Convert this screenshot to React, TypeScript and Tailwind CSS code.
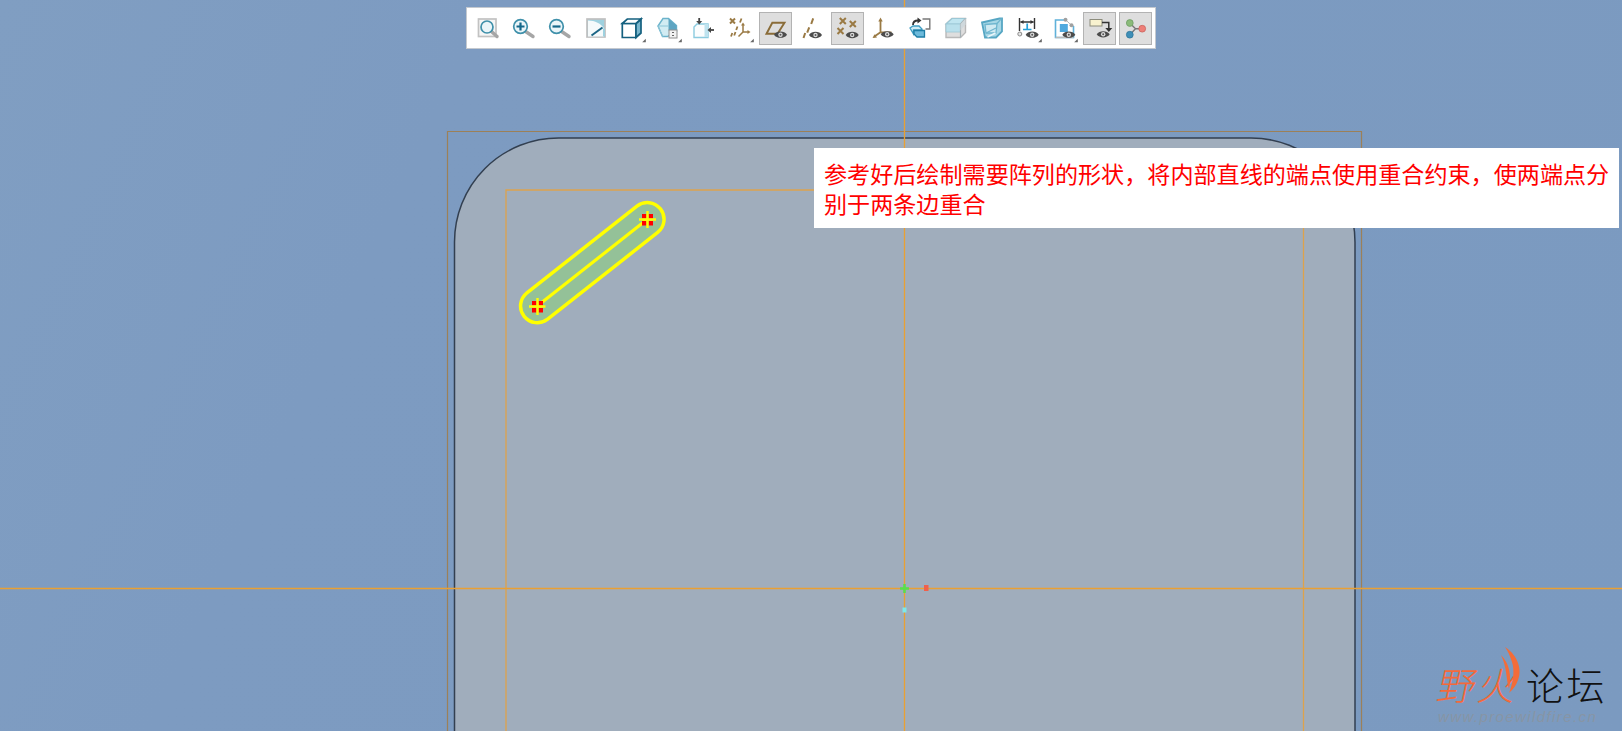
import React from "react";

const Eye = ({ x = 23, y = 23 }: { x?: number; y?: number }) => (
  <g transform={`translate(${x} ${y})`}>
    <path d="M-6.500 0C-4-4.200 4-4.200 6.500 0C4 4.200-4 4.200-6.500 0Z" fill="#4c4c4c" />
    <circle r="2.200" fill="#dcdcdc" />
    <circle r="1" fill="#555" />
  </g>
);
const Corner = () => <path d="M32.300 30.300h-3.600l3.600-3.600z" fill="#666" />;
const Glass = ({ x, y, r = 7 }: { x: number; y: number; r?: number }) => (
  <g>
    <path d={`M${x + r * 0.7} ${y + r * 0.7}L27.500 24.500`} stroke="#a6a6a6" strokeWidth="3.400" strokeLinecap="round" />
    <circle cx={x} cy={y} r={r} fill="#eaf5f9" stroke="#3f90aa" strokeWidth="1.700" />
  </g>
);
const X = ({ x, y, s = 3 }: { x: number; y: number; s?: number }) => (
  <path d={`M${x - s} ${y - s}l${2 * s} ${2 * s}M${x + s} ${y - s}l${-2 * s} ${2 * s}`} stroke="#9a7a44" strokeWidth="2" />
);

const icons: { key: string; on?: boolean; body: React.ReactNode }[] = [
  { key: "refit", body: <><rect x="9" y="7" width="17.500" height="17.500" fill="#f6f6f6" stroke="#c2c2c2" strokeWidth="1.700" /><Glass x={17.500} y={15} r={6} /></> },
  { key: "in", body: <><Glass x={15} y={14.500} r={6.800} /><path d="M11 14.500h8M15 10.500v8" stroke="#14688a" strokeWidth="2.200" /></> },
  { key: "out", body: <><Glass x={15} y={14.500} r={6.800} /><path d="M11 14.500h8" stroke="#14688a" strokeWidth="2.200" /></> },
  { key: "repaint", body: <><rect x="9.500" y="7" width="18" height="18" fill="#9ed1df" stroke="#c0c0c0" strokeWidth="1.700" /><path d="M10.500 24.500V8.500c7 0 13 3 16 8v8z" fill="#f5fafb" /><path d="M14 23.500l11-8" stroke="#1a6585" strokeWidth="2" /><path d="M26.500 16.500v8" stroke="#9ed1df" strokeWidth="2" /></> },
  { key: "cube", body: <><path d="M8.800 11.500h13.700v14H8.800z" fill="#fff" stroke="#14607f" strokeWidth="1.700" /><path d="M22.500 11.500l5-4.500v14l-5 4.500z" fill="#79b6cd" stroke="#14607f" strokeWidth="1.700" /><path d="M8.800 11.500l5-4.500h13.700l-5 4.500z" fill="#fff" stroke="#14607f" strokeWidth="1.700" /><Corner /></> },
  { key: "saved", body: <><path d="M8.500 14l5-7.500h5.500l8 7v6l-9 5h-5z" fill="#d2ecf3" stroke="#6bb3cb" strokeWidth="1.400" /><path d="M19 6.500l8 7v5h-8z" fill="#5ea5c2" /><path d="M8.500 14h10.500M13.500 25l-5-11" fill="none" stroke="#8cc6d8" strokeWidth="1" /><rect x="19.500" y="18" width="8" height="8" fill="#f2f2f2" stroke="#8f8f8f" /><path d="M22.500 20.500h2M22.500 23.500h2" stroke="#666" /><Corner /></> },
  { key: "reorient", body: <><path d="M8.500 15l3-3h11v13.500H8.500z" fill="#fbfdfe" stroke="#8ccbdf" strokeWidth="1.400" /><path d="M22.500 12v13l-3.500 0 0-13z" fill="#bfe3ef" /><path d="M13.700 6v4" stroke="#444" strokeWidth="1.800" /><path d="M10.700 9h6l-3 3.500z" fill="#444" /><path d="M25 18h3.500" stroke="#444" strokeWidth="1.800" /><path d="M25.500 15v6L22 18z" fill="#444" /></> },
  { key: "datumdisp", body: <><X x={11} y={9} s={2.500} /><path d="M20 6.500l-1.500 4M16 14.500l-1.300 3.500M14 20l-1.300 3.500M10.800 21l-1.300 3.500" stroke="#9a7a44" strokeWidth="1.800" /><path d="M21.500 12v8M21.500 20h6M21.500 20l-4.500 4.500" stroke="#9a7a44" strokeWidth="1.500" /><path d="M21.500 10.500l-2 3h4zM29 20l-3-2v4z" fill="#9a7a44" /><Corner /></> },
  { key: "plane", on: true, body: <><path d="M9 21.700L14.800 10.800H27L20 21.700Z" fill="none" stroke="#8a6c38" strokeWidth="1.900" /><Eye x={23} y={22.700} /></> },
  { key: "axis", body: <><path d="M19.700 6.300l-2 5.700M15.700 15.300l-2 5.400M11.700 21l-1.700 5" stroke="#9a7a44" strokeWidth="2" /><Eye x={22} y={23} /></> },
  { key: "point", on: true, body: <><X x={13.300} y={9} /><X x={23.300} y={12} /><X x={11} y={19} /><Eye x={22.700} y={23} /></> },
  { key: "csys", body: <><path d="M15 8v12.300M15 20.300l-6.500 4.500M15 20.300h11" stroke="#9a7a44" strokeWidth="1.800" /><path d="M15 5.500l-2.200 4h4.400z" fill="#9a7a44" /><path d="M7 26l4.500-.5-2.300-3.300z" fill="#9a7a44" /><Eye x={21.700} y={22.300} /></> },
  { key: "annot", body: <><path d="M21 7h7.300v10H24" fill="none" stroke="#777" strokeWidth="1.400" /><path d="M11.500 13c0-3 2-4.500 5-4.500" fill="none" stroke="#333" strokeWidth="1.800" /><path d="M16 5.500l4 3-4 3z" fill="#333" /><path d="M8.500 16l3-2h6l3 3v1H12v4z" fill="#d0ecf5" stroke="#3f9dc2" strokeWidth="1.300" /><path d="M12.500 18.500h10.500v6.500H15.500l-3-3z" fill="#6dbadb" stroke="#1e7ea6" strokeWidth="1.300" /></> },
  { key: "shade", body: <><path d="M8.500 12l6-5.500h13.500v14l-5 5H8.500z" fill="#dedede" stroke="#b8b8b8" strokeWidth="1.400" /><path d="M8.500 12l6-5.500h13.500l-5 5.500z" fill="#bfe5f0" stroke="#9cc8d6" strokeWidth="1.100" /><path d="M8.500 12H23v8H8.500z" fill="#b9e0ec" stroke="#9cc8d6" strokeWidth=".8" /><path d="M23 12v13.500M23 12l5-5.500" stroke="#a4b0b5" strokeWidth="1.200" /><path d="M23 12l5-5.500v6l-5 6z" fill="#cfd8dc" /></> },
  { key: "wire", body: <><path d="M8.500 10.500L26 6.500l2.500 0v13l-6 6H11.500z" fill="#a7d7e6" stroke="#56a6c3" strokeWidth="1.800" /><path d="M11.500 12.500l12-1-1 9.500H12.500z" fill="#cfeaf2" stroke="#6fb6cf" strokeWidth="1.300" /><path d="M12.500 21l10-5M23.500 11.500l4.500-5" stroke="#6fb6cf" strokeWidth="1.200" /><path d="M14 25l8-4" stroke="#eaf6fa" strokeWidth="1.400" /></> },
  { key: "dim", body: <><path d="M10 6v13M25 6v11M11 10h13" stroke="#333" strokeWidth="1.400" /><path d="M11 10l3-2v4zM24 10l-3-2v4z" fill="#333" /><path d="M17.700 11.500v5.700M13.500 17.500h8.500" stroke="#27a0d8" strokeWidth="1.700" /><circle cx="10.300" cy="22" r="2" fill="#e6e6e6" stroke="#8a8a8a" /><Eye x={22.700} y={22.700} /><Corner /></> },
  { key: "appear", body: <><path d="M19 8H10v17.500h18V14" fill="#fff" stroke="#5fb1da" strokeWidth="1.600" /><path d="M10 25.500h18" stroke="#bbb" strokeWidth="1.400" /><rect x="14.300" y="12" width="8" height="8" fill="#4fa9de" /><path d="M20 7.700l6 5.600" stroke="#bbb" strokeWidth="1" /><circle cx="20" cy="7.700" r="2" fill="#a0a0a0" /><circle cx="26" cy="13.300" r="2" fill="#a0a0a0" /><Eye x={23.300} y={22.700} /><Corner /></> },
  { key: "flag", on: true, body: <><rect x="8.500" y="7.500" width="12" height="6.500" fill="#f8f2cf" stroke="#8c8c7c" /><path d="M20.500 10.500h6.800v7" fill="none" stroke="#333" strokeWidth="1.500" /><path d="M23.800 16h7l-3.500 4z" fill="#333" /><Eye x={21.700} y={22.300} /></> },
  { key: "tree", on: true, body: <><path d="M12.300 11l5.700 5.700-5.700 6M18 16.700h6.700" fill="none" stroke="#777" strokeWidth="1.400" /><circle cx="12.300" cy="11" r="3.400" fill="#8bbb7a" stroke="#6f9d66" strokeWidth=".8" /><circle cx="24.700" cy="16.700" r="3.400" fill="#ee7f78" stroke="#c96660" strokeWidth=".8" /><circle cx="12.300" cy="22.700" r="3.400" fill="#3f8fb8" stroke="#30779b" strokeWidth=".8" /></> },
];

export default function App() {
  return (
    <div
      className="relative w-[1622px] h-[731px] overflow-hidden bg-[linear-gradient(115deg,#809ec2_0%,#7d9bc1_25%,#7b9ac0_100%)]"
      style={{ fontFamily: '"Liberation Sans","Noto Sans CJK SC",sans-serif' }}
    >
      <svg className="absolute inset-0" width="1622" height="731" viewBox="0 0 1622 731">
        <path d="M454.500 740V242a104 104 0 0 1 104-104H1251a104 104 0 0 1 104 104V740Z" fill="#a0adbc" stroke="#323f50" strokeWidth="1.500" />
        <path d="M447.500 740V131.500H1361.500V740" fill="none" stroke="#9c8058" strokeWidth="1.200" />
        <path d="M506 740V190H1303.500V740" fill="none" stroke="#dda24c" strokeWidth="1.300" />
        <path d="M904.500 0V731M0 588.500H1622" stroke="#e9a033" strokeWidth="1.300" />
        <path d="M904.500 584v9M900 588.500h9" stroke="#57e04a" strokeWidth="2.500" />
        <rect x="924" y="585" width="4.500" height="6" fill="#f0604a" />
        <rect x="902.500" y="607.500" width="4" height="5" fill="#7fe8e8" />
        <path d="M537.300 306L647.300 219.300" stroke="#ffff00" strokeWidth="37" strokeLinecap="round" />
        <path d="M537.300 306L647.300 219.300" stroke="#94c198" strokeWidth="30" strokeLinecap="round" />
        <path d="M537.300 306L647.300 219.300" stroke="#ffff00" strokeWidth="3.200" />
        <g fill="#ff0000">
          <path d="M532 301h4.500v4.500H532zM538.500 301h4.500v4.500h-4.500zM532 308h4.500v4.500H532zM538.500 308h4.500v4.500h-4.500z" />
          <path d="M642 214h4.500v4.500H642zM648.500 214h4.500v4.500h-4.500zM642 221h4.500v4.500H642zM648.500 221h4.500v4.500h-4.500z" />
        </g>
        <path d="M529 306.500h16.500M537.500 298v17M639 219.500h17M647.500 211v17" stroke="#ffff00" strokeWidth="2.400" />
      </svg>

      <div className="relative mx-auto mt-[7px] flex h-[42px] w-[690px] items-center justify-center border border-[#c4c9cf] bg-white">
        {icons.map((i) => (
          <div key={i.key} className="flex h-[33px] w-[36px] items-center justify-center">
            <div className={`flex h-[33px] w-[33px] items-center justify-center border ${i.on ? "border-[#b3b3b3] bg-[#dedede]" : "border-transparent"}`}>
              <svg className="shrink-0" width="33" height="33" viewBox="1.500 0 33 33">{i.body}</svg>
            </div>
          </div>
        ))}
      </div>

      <div className="absolute left-[814px] top-[148px] h-[80px] w-[805px] bg-white pl-[10px] pr-[4px] pt-[12px] text-[23.100px] leading-[30px] text-[#ff0000]">
        参考好后绘制需要阵列的形状，将内部直线的端点使用重合约束，使两端点分别于两条边重合
      </div>

      <div className="absolute left-[1436px] top-[645px] h-[82px] w-[180px]">
        <svg className="absolute left-[53px] top-[2px]" width="36" height="60" viewBox="0 0 36 60">
          <path d="M16 0C30 9 33 24 29 33C27 39 24 42 20 46C24 36 26 24 23 15C21 9 19 4 16 0Z" fill="#f46c38" />
          <path d="M12 8C20 16 23 28 20 42C17 32 18 20 12 8Z" fill="#f46c38" />
        </svg>
        <div className="absolute left-[2px] top-[20px] whitespace-nowrap text-[38px] font-light leading-[44px] tracking-[2.500px]">
          <span className="inline-block -skew-x-12 text-[#f4693a]">野火</span>
          <span className="ml-[7px] text-[#111]">论坛</span>
        </div>
        <div className="absolute left-[2px] top-[63px] whitespace-nowrap text-[15px] italic leading-[18px] tracking-[1.400px] text-[#8795a5]">www.proewildfire.cn</div>
      </div>
    </div>
  );
}
